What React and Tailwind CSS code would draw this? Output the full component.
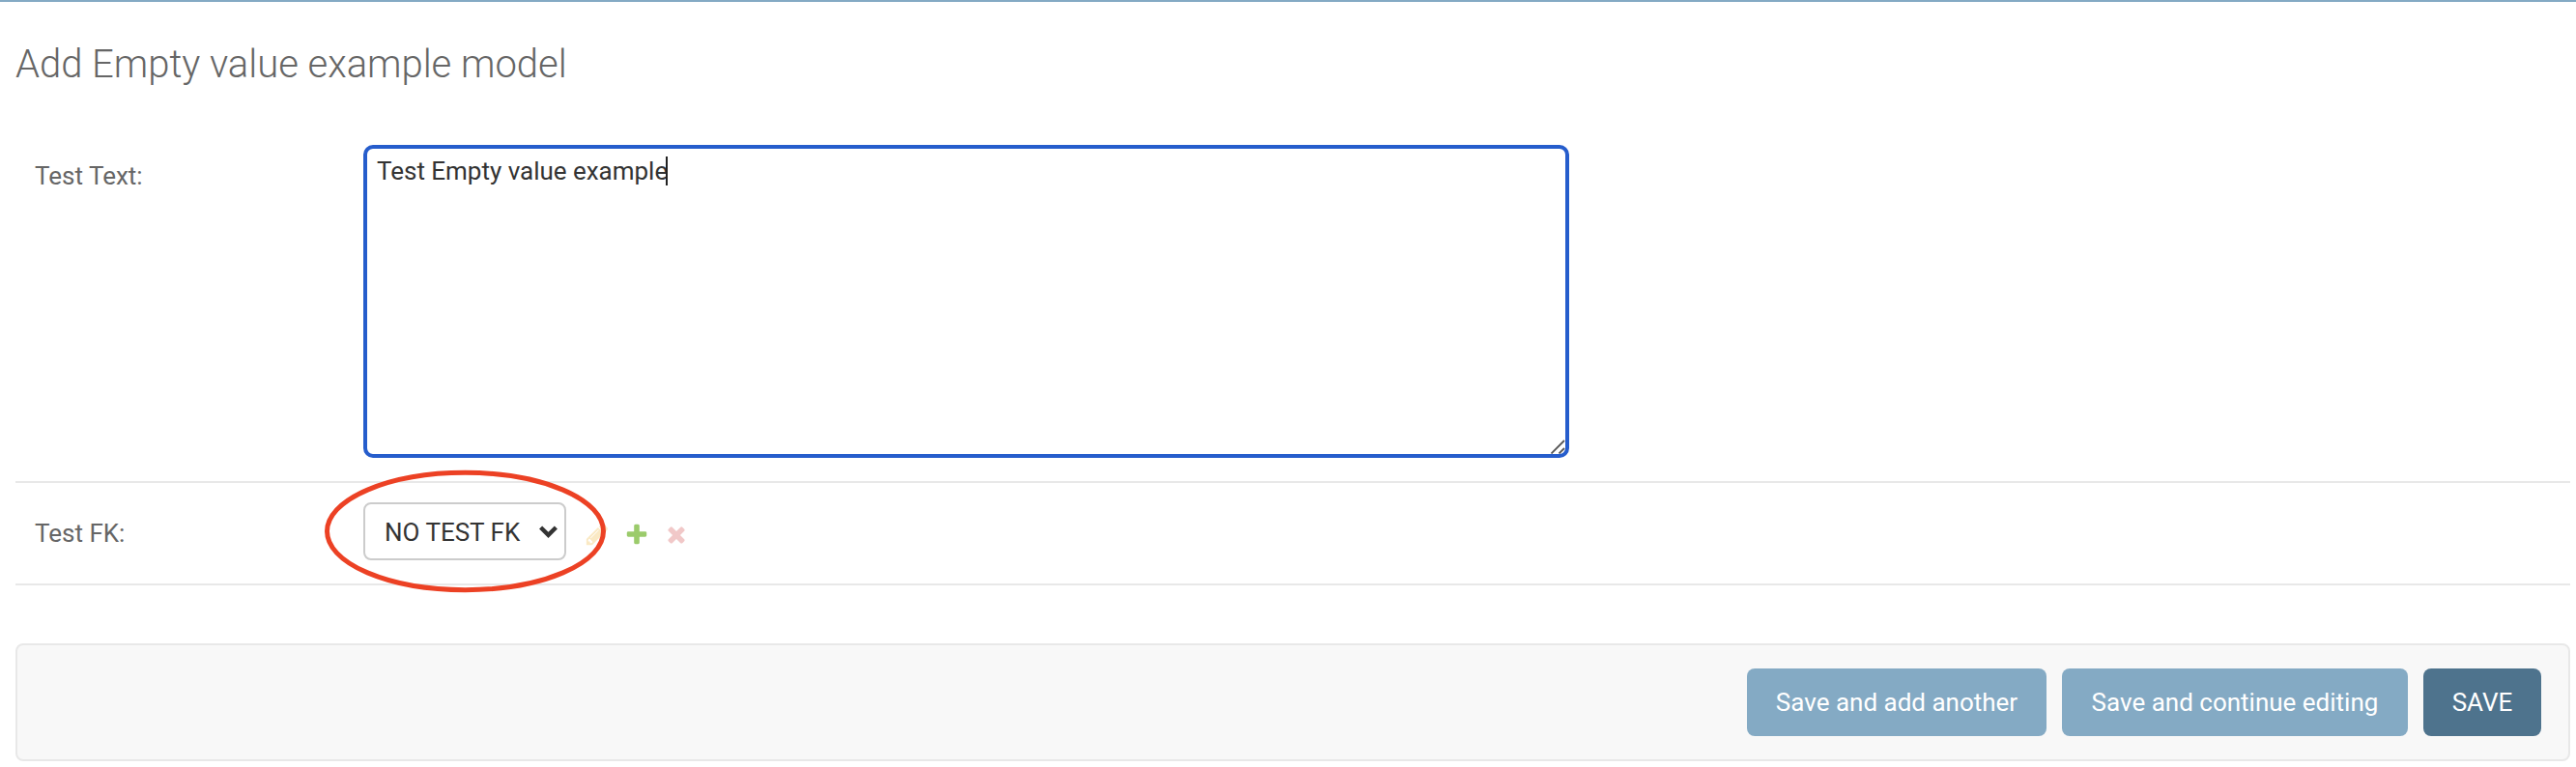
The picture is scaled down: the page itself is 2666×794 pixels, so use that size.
const PLUS =
  'M1600 796v192q0 40-28 68t-68 28h-416v416q0 40-28 68t-68 28h-192q-40 0-68-28t-28-68v-416h-416q-40 0-68-28t-28-68v-192q0-40 28-68t68-28h416v-416q0-40 28-68t68-28h192q40 0 68 28t28 68v416h416q40 0 68 28t28 68z';
const CROSS =
  'M1490 1322q0 40-28 68l-136 136q-28 28-68 28t-68-28l-294-294-294 294q-28 28-68 28t-68-28l-136-136q-28-28-28-68t28-68l294-294-294-294q-28-28-28-68t28-68l136-136q28-28 68-28t68 28l294 294 294-294q28-28 68-28t68 28l136 136q28 28 28 68t-28 68l-294 294 294 294q28 28 28 68z';
const PENCIL =
  'M491 1536l91-91-235-235-91 91v107h128v128h107zm523-928q0-22-22-22-10 0-17 7l-542 542q-7 7-7 17 0 22 22 22 10 0 17-7l542-542q7-7 7-17zm-54-192l416 416-832 832h-416v-416zm683 96q0 53-37 90l-166 166-416-416 166-165q36-38 90-38 53 0 91 38l235 234q37 39 37 91z';

function Icon({ path, className }) {
  return (
    <svg viewBox="0 0 1792 1792" className={`size-[26px] shrink-0 ${className}`} fill="currentColor">
      <path d={path} />
    </svg>
  );
}

function TextArea() {
  return (
    <div
      role="textbox"
      className="relative flex h-[324px] w-[1248px] items-start rounded-[10px] border-4 border-[#265dcc] pl-[10px] pt-2 leading-[30px] text-[#333]"
    >
      <span className="whitespace-nowrap tracking-[-0.02px]">Test Empty value example</span>
      <span className="-ml-[2px] h-[30px] w-[2px] bg-[#222]" />
      <svg className="absolute bottom-0 right-0 size-[15px]" viewBox="0 0 15 15" fill="none">
        <path d="M0.5 14.5 14 1M8.5 14.5 14 9" stroke="#555" strokeWidth="1.8" />
      </svg>
    </div>
  );
}

function Select() {
  return (
    <div className="flex h-[60px] w-[210px] items-center justify-between rounded-lg border-2 border-[#ccc] bg-white pl-5 pr-[7px] text-[#333]">
      <span className="whitespace-nowrap pt-[2px] leading-[30px]">NO TEST FK</span>
      <svg className="h-[13px] w-[19px]" viewBox="0 0 19 13" fill="none">
        <path d="M1.6 2 9.5 9.8 17.4 2" stroke="#333" strokeWidth="4.4" />
      </svg>
    </div>
  );
}

export default function App() {
  return (
    <div className="flex h-[794px] w-[2666px] flex-col overflow-hidden border-t-2 border-[#84aac4] bg-white pl-4 pr-[6px] font-['Roboto',sans-serif] text-[26px] text-[#666]">
      <h1 className="h-[88px] whitespace-nowrap pt-[41px] text-[40px] font-light leading-[48px] tracking-[-0.03px]">
        Add Empty value example model
      </h1>

      <div className="flex h-[410px] items-start border-b-2 border-[#e8e8e8] pl-5 pt-[60px]">
        <label className="mt-4 w-[340px] leading-[32px]">Test Text:</label>
        <TextArea />
      </div>

      <div className="relative flex h-[106px] items-start border-b-2 border-[#e8e8e8] pl-5 pt-5">
        <label className="mt-4 w-[340px] leading-[32px]">Test FK:</label>
        <Select />
        <div className="ml-[19px] mt-5 flex gap-[15px]">
          <Icon path={PENCIL} className="text-[#fae9c4]" />
          <Icon path={PLUS} className="text-[#9bcb6b]" />
          <Icon path={CROSS} className="text-[#f1c8c8]" />
        </div>
        <svg className="absolute left-[320px] top-[-14px] h-[128px] w-[292px]" viewBox="0 0 292 128" fill="none">
          <ellipse cx="145.5" cy="64" rx="143" ry="60.7" stroke="#ec4124" strokeWidth="5" />
        </svg>
      </div>

      <div className="mt-[60px] flex h-[122px] items-center justify-end gap-4 rounded-lg border-2 border-[#e8e8e8] bg-[#f8f8f8] pr-7 text-white">
        <button className="h-[70px] w-[310px] whitespace-nowrap rounded-lg bg-[#84aac4]">Save and add another</button>
        <button className="h-[70px] w-[358px] whitespace-nowrap rounded-lg bg-[#84aac4]">Save and continue editing</button>
        <button className="h-[70px] w-[122px] whitespace-nowrap rounded-lg bg-[#4e738d]">SAVE</button>
      </div>
    </div>
  );
}
